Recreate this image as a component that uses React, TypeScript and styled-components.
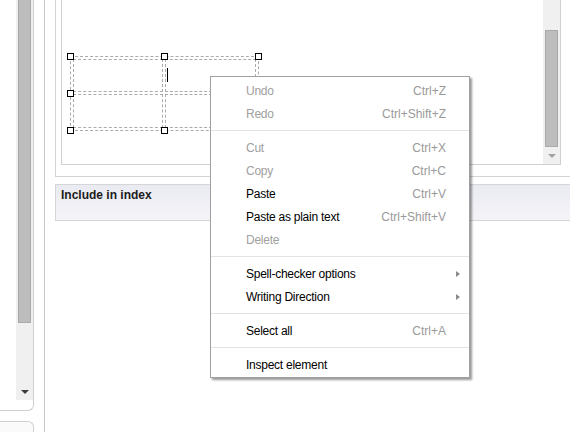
import styled, { createGlobalStyle } from "styled-components";

type MenuEntry =
  | { kind: "item"; label: string; shortcut?: string; disabled?: boolean; submenu?: boolean }
  | { kind: "sep" };

const menu: MenuEntry[] = [
  { kind: "item", label: "Undo", shortcut: "Ctrl+Z", disabled: true },
  { kind: "item", label: "Redo", shortcut: "Ctrl+Shift+Z", disabled: true },
  { kind: "sep" },
  { kind: "item", label: "Cut", shortcut: "Ctrl+X", disabled: true },
  { kind: "item", label: "Copy", shortcut: "Ctrl+C", disabled: true },
  { kind: "item", label: "Paste", shortcut: "Ctrl+V" },
  { kind: "item", label: "Paste as plain text", shortcut: "Ctrl+Shift+V" },
  { kind: "item", label: "Delete", disabled: true },
  { kind: "sep" },
  { kind: "item", label: "Spell-checker options", submenu: true },
  { kind: "item", label: "Writing Direction", submenu: true },
  { kind: "sep" },
  { kind: "item", label: "Select all", shortcut: "Ctrl+A" },
  { kind: "sep" },
  { kind: "item", label: "Inspect element" },
];

// resize handles around the selected table (x, y of the handle centre)
const handles = [
  [0, 0],
  [94, 0],
  [188, 0],
  [0, 37],
  [188, 37],
  [0, 74],
  [94, 74],
  [188, 74],
];

const GlobalStyle = createGlobalStyle`
  html, body {
    margin: 0;
    padding: 0;
    background: #fff;
  }
  body {
    font-family: "Liberation Sans", Arial, sans-serif;
  }
`;

export default function App() {
  return (
    <>
      <GlobalStyle />
      <Screen>
        <LeftPane>
          <TreePanel>
            <ScrollTrack>
              <LeftThumb />
              <ArrowBox>
                <DownArrow $color="#3c3c3c" />
              </ArrowBox>
            </ScrollTrack>
          </TreePanel>
          <NextPanel />
        </LeftPane>

        <RightPane>
          <EditorFrame>
            <Editor>
              <EditArea>
                <TableWrap>
                  <DocTable>
                    <Cell />
                    <Cell>
                      <Caret />
                    </Cell>
                    <Cell />
                    <Cell />
                  </DocTable>
                  {handles.map(([x, y], i) => (
                    <Handle key={i} $x={x} $y={y} />
                  ))}
                </TableWrap>
              </EditArea>
              <EditorScroll>
                <RightThumb />
                <ArrowBox>
                  <DownArrow $color="#a3a3a3" />
                </ArrowBox>
              </EditorScroll>
            </Editor>
          </EditorFrame>
          <SectionHeader>Include in index</SectionHeader>
        </RightPane>

        <ContextMenu>
          {menu.map((entry, i) =>
            entry.kind === "sep" ? (
              <Separator key={i} />
            ) : (
              <MenuItem key={i} $disabled={entry.disabled}>
                <Label>{entry.label}</Label>
                <Shortcut>{entry.shortcut}</Shortcut>
                <SubArrow>{entry.submenu && <Chevron />}</SubArrow>
              </MenuItem>
            )
          )}
        </ContextMenu>
      </Screen>
    </>
  );
}

const Screen = styled.div`
  position: relative;
  display: flex;
  width: 570px;
  height: 432px;
  overflow: hidden;
`;

const LeftPane = styled.div`
  flex: none;
  width: 44px;
  border-right: 1px solid #c9c9c9;
  display: flex;
  flex-direction: column;
`;

const TreePanel = styled.div`
  width: 33px;
  height: 410px;
  border-right: 1px solid #cfcfcf;
  border-bottom: 1px solid #cfcfcf;
  border-bottom-right-radius: 6px;
  display: flex;
  justify-content: flex-end;
  align-items: flex-start;
`;

const ScrollTrack = styled.div`
  width: 17px;
  height: 400px;
  background: #f0f0f0;
  display: flex;
  flex-direction: column;
  align-items: center;
`;

const LeftThumb = styled.div`
  width: 11px;
  height: 322px;
  background: #bdbdbd;
  border: 1px solid #a9a9a9;
  border-top: none;
`;

const ArrowBox = styled.div`
  margin-top: auto;
  width: 17px;
  height: 17px;
  display: flex;
  align-items: center;
  justify-content: center;
`;

const DownArrow = styled.div<{ $color: string }>`
  width: 0;
  height: 0;
  border-left: 4px solid transparent;
  border-right: 4px solid transparent;
  border-top: 4px solid ${(p) => p.$color};
`;

const NextPanel = styled.div`
  margin-top: 10px;
  width: 33px;
  flex: 1;
  background: #fafafa;
  border-top: 1px solid #cfcfcf;
  border-right: 1px solid #cfcfcf;
  border-top-right-radius: 6px;
`;

const RightPane = styled.div`
  flex: none;
  padding-left: 10px;
  display: flex;
  flex-direction: column;
`;

const EditorFrame = styled.div`
  width: 540px;
  padding: 0 0 11px 5px;
  border-left: 1px solid #d3d3d3;
  border-bottom: 1px solid #d3d3d3;
`;

const Editor = styled.div`
  width: 498px;
  height: 164px;
  display: flex;
  border: 1px solid #d0d0d0;
  border-top: none;
`;

const EditArea = styled.div`
  flex: 1;
  padding: 56px 0 0 8px;
`;

const TableWrap = styled.div`
  position: relative;
  width: 189px;
`;

const DocTable = styled.div`
  display: grid;
  grid-template-columns: 90px 91px;
  grid-template-rows: 33px 34px;
  gap: 2px;
  padding: 2px;
  border: 1px dashed #ababab;
`;

const Cell = styled.div`
  box-sizing: border-box;
  border: 1px dashed #ababab;
`;

const Caret = styled.div`
  width: 1px;
  height: 14px;
  margin: 8px 0 0 1px;
  background: #000;
`;

const Handle = styled.div<{ $x: number; $y: number }>`
  position: absolute;
  left: ${(p) => p.$x - 3}px;
  top: ${(p) => p.$y - 3}px;
  width: 5px;
  height: 5px;
  background: #fff;
  border: 1px solid #000;
`;

const EditorScroll = styled.div`
  flex: none;
  width: 17px;
  background: #f0f0f0;
  display: flex;
  flex-direction: column;
  align-items: center;
  padding-top: 30px;
`;

const RightThumb = styled.div`
  width: 11px;
  height: 115px;
  background: #bdbdbd;
  border: 1px solid #a9a9a9;
`;

const SectionHeader = styled.div`
  margin-top: 7px;
  width: 540px;
  box-sizing: border-box;
  height: 37px;
  padding: 3px 0 0 5px;
  border: 1px solid #d6d6d6;
  background: linear-gradient(#eaeaf2, #f4f4f8);
  font-family: "Liberation Sans", Arial, sans-serif;
  font-weight: bold;
  font-size: 12px;
  line-height: 14px;
  color: #1c1c1c;
`;

const ContextMenu = styled.div`
  position: absolute;
  left: 210px;
  top: 76px;
  width: 258px;
  padding: 2px 0 1px;
  background: #fff;
  border: 1px solid #a0a0a0;
  box-shadow: 2px 2px 2px rgba(0, 0, 0, 0.4);
  font-family: "Liberation Sans", Arial, sans-serif;
  font-size: 12px;
`;

const MenuItem = styled.div<{ $disabled?: boolean }>`
  display: grid;
  grid-template-columns: 1fr auto 23px;
  align-items: center;
  height: 23px;
  padding-left: 35px;
  color: ${(p) => (p.$disabled ? "#a0a0a0" : "#000")};
`;

const Label = styled.span`
  letter-spacing: -0.25px;
`;

const Shortcut = styled.span`
  color: #9a9a9a;
`;

const SubArrow = styled.span`
  display: flex;
  padding-left: 10px;
`;

const Chevron = styled.span`
  width: 0;
  height: 0;
  border-top: 3.5px solid transparent;
  border-bottom: 3.5px solid transparent;
  border-left: 4px solid #8a8a8a;
`;

const Separator = styled.div`
  height: 1px;
  margin: 5px 0;
  background: #e3e3e3;
`;
